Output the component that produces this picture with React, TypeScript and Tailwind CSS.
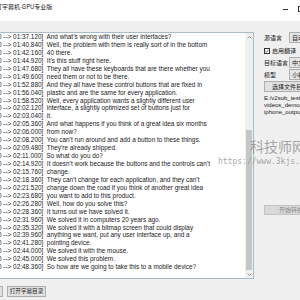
import React from 'react';

const lines = [
  '0 --> 01:37.120]  And what\u2019s wrong with their user interfaces?',
  '0 --> 01:40.840]  Well, the problem with them is really sort of in the bottom',
  '0 --> 01:42.160]  40 there.',
  '0 --> 01:44.920]  It\u2019s this stuff right here.',
  '0 --> 01:47.680]  They all have these keyboards that are there whether you',
  '0 --> 01:49.600]  need them or not to be there.',
  '0 --> 01:52.880]  And they all have these control buttons that are fixed in',
  '0 --> 01:56.040]  plastic and are the same for every application.',
  '0 --> 01:58.520]  Well, every application wants a slightly different user',
  '0 --> 02:02.120]  interface, a slightly optimized set of buttons just for',
  '0 --> 02:03.040]  it.',
  '0 --> 02:05.360]  And what happens if you think of a great idea six months',
  '0 --> 02:06.000]  from now?',
  '0 --> 02:08.200]  You can\u2019t run around and add a button to these things.',
  '0 --> 02:09.480]  They\u2019re already shipped.',
  '0 --> 02:11.000]  So what do you do?',
  '0 --> 02:14.920]  It doesn\u2019t work because the buttons and the controls can\u2019t',
  '0 --> 02:15.760]  change.',
  '0 --> 02:18.360]  They can\u2019t change for each application, and they can\u2019t',
  '0 --> 02:21.520]  change down the road if you think of another great idea',
  '0 --> 02:23.680]  you want to add to this product.',
  '0 --> 02:26.280]  Well, how do you solve this?',
  '0 --> 02:28.360]  It turns out we have solved it.',
  '0 --> 02:31.960]  We solved it in computers 20 years ago.',
  '0 --> 02:35.320]  We solved it with a bitmap screen that could display',
  '0 --> 02:39.960]  anything we want, put any user interface up, and a',
  '0 --> 02:41.280]  pointing device.',
  '0 --> 02:44.000]  We solved it with the mouse.',
  '0 --> 02:45.000]  We solved this problem.',
  '0 --> 02:48.360]  So how are we going to take this to a mobile device?',
];

function Combo({ text }: { text: string }) {
  return (
    <div className="w-[40px] h-[11px] shrink-0 border border-[#adadad] bg-[#e5e5e5] flex items-center pl-[2px] text-[6px] leading-none whitespace-nowrap">
      {text}
    </div>
  );
}

export default function App() {
  return (
    <div className="relative w-[300px] h-[300px] overflow-hidden bg-[#f0f0f0] text-[#1a1a1a] font-['Liberation_Sans','Noto_Sans_CJK_SC',sans-serif]">
      {/* title bar */}
      <div className="h-[21px] bg-white flex items-start justify-between pt-[3px]">
        <span className="ml-[-4px] text-[6px] leading-[7px] whitespace-nowrap font-['Noto_Sans_CJK_SC',sans-serif]">
          打字幕机-GPU专业版
        </span>
        <div className="flex items-center gap-[10px] mt-[3px] mr-[-4px]">
          <div className="w-[5px] h-px bg-[#333]" />
          <div className="w-[6px] h-[6px] border border-[#333]" />
        </div>
      </div>

      <div className="flex mt-[11px]">
        {/* subtitle text box */}
        <div className="ml-[-2px] w-[256px] h-[247px] shrink-0 border border-[#a7bccb] bg-white flex">
          <div className="flex-1 overflow-hidden ml-[-1px] text-[6.4px] leading-[7.93px] whitespace-pre">
            {lines.map((l, i) => (
              <div key={i}>{l}</div>
            ))}
          </div>
          <div className="w-[8px] bg-[#f0f0f0] flex flex-col items-center">
            <div className="h-[8px] flex items-center justify-center">
              <svg width="5" height="3" viewBox="0 0 5 3">
                <path d="M0.5 2.5 L2.5 0.5 L4.5 2.5" stroke="#777" strokeWidth="0.8" fill="none" />
              </svg>
            </div>
            <div className="flex-1" />
            <div className="w-[6px] h-[140px] bg-[#c6c6c6]" />
            <div className="h-[8px] flex items-center justify-center">
              <svg width="5" height="3" viewBox="0 0 5 3">
                <path d="M0.5 0.5 L2.5 2.5 L4.5 0.5" stroke="#777" strokeWidth="0.8" fill="none" />
              </svg>
            </div>
          </div>
        </div>

        {/* right options panel */}
        <div className="ml-[10px] w-[60px] shrink-0 flex flex-col text-[6px] leading-none whitespace-nowrap font-['Noto_Sans_CJK_SC',sans-serif]">
          <div className="h-[11px] flex items-center">
            <span className="w-[25px] shrink-0">源语言</span>
            <Combo text="自动检测" />
          </div>
          <div className="mt-[4px] h-[7px] flex items-center gap-[2px]">
            <div className="w-[6px] h-[6px] border border-[#333] bg-white flex items-center justify-center">
              <svg width="4" height="4" viewBox="0 0 4 4">
                <path d="M0.4 2 L1.5 3.1 L3.6 0.8" stroke="#222" strokeWidth="0.7" fill="none" />
              </svg>
            </div>
            <span>启用翻译</span>
          </div>
          <div className="mt-[3px] h-[11px] flex items-center">
            <span className="w-[25px] shrink-0">目标语言</span>
            <Combo text="中文" />
          </div>
          <div className="mt-[1px] h-[11px] flex items-center">
            <span className="w-[25px] shrink-0">模型</span>
            <Combo text="小模型" />
          </div>
          <div className="mt-[1px] h-[11px] w-[50px] border border-[#adadad] bg-[#e1e1e1] flex items-center pl-[7px]">
            选择文件目录
          </div>
          <div className="mt-[3px] leading-[7px] font-['Liberation_Sans',sans-serif] text-[6px]">
            <div>E:/v2sub_test/</div>
            <div>videos_demo/</div>
            <div>iphone_output</div>
          </div>
          <div className="mt-[89px] h-[10px] w-[50px] border border-[#c4c4c4] bg-[#d9d9d9] text-[#8a8a8a] flex items-center pl-[14px]">
            开始转换
          </div>
        </div>
      </div>

      {/* bottom buttons */}
      <div className="mt-[7px] flex gap-[4px] text-[5.6px] leading-none whitespace-nowrap font-['Noto_Sans_CJK_SC',sans-serif]">
        <div className="ml-[-27px] w-[30px] h-[11px] border border-[#adadad] bg-[#e1e1e1]" />
        <div className="w-[39px] h-[11px] border border-[#adadad] bg-[#e1e1e1] flex items-center justify-center">
          打开字幕目录
        </div>
      </div>

      {/* watermark */}
      <div className="absolute left-[250px] top-[139px] text-[14px] leading-none text-[#8f8f8f]/80 whitespace-nowrap font-['Noto_Sans_CJK_SC',sans-serif]">
        科技师网
      </div>
      <div className="absolute left-[218px] top-[158px] text-[8px] leading-none text-[#8f8f8f]/80 whitespace-nowrap font-['DejaVu_Sans_Mono',monospace]">
        https://www.3kjs.com
      </div>
    </div>
  );
}
